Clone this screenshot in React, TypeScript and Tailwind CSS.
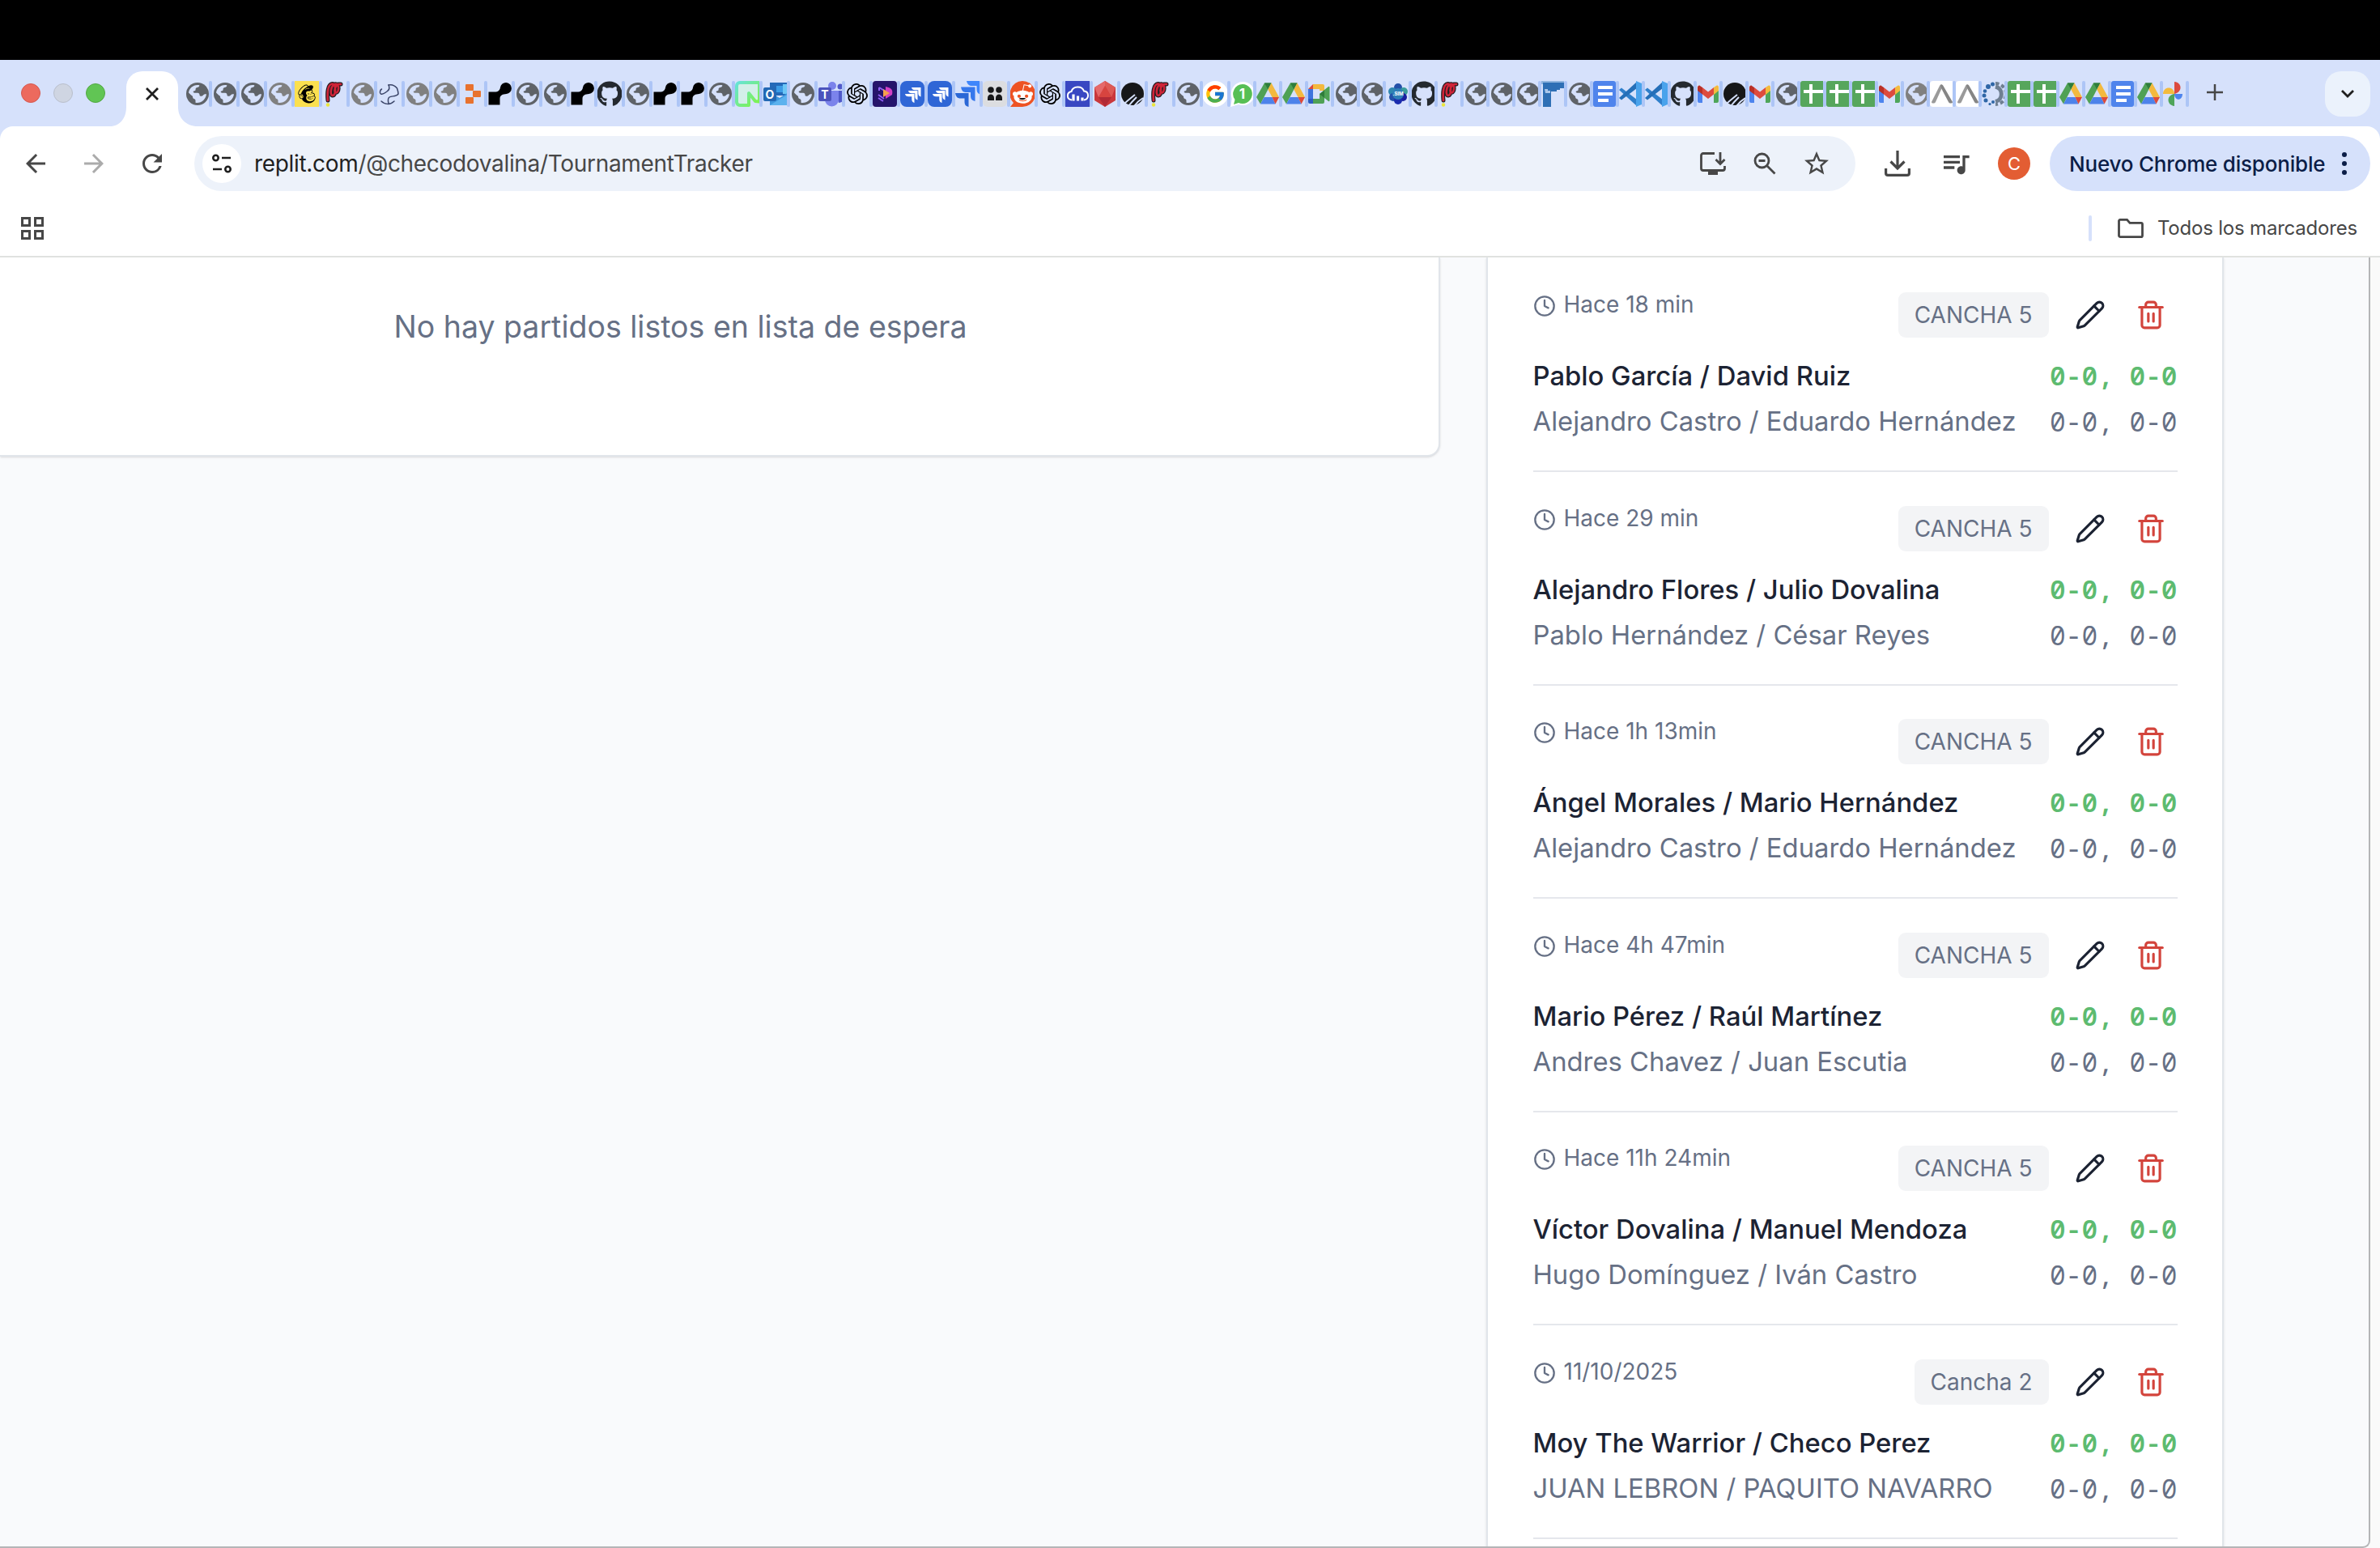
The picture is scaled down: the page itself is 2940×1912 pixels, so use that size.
import React from 'react';
import { Clock, Pencil, Trash2 } from 'lucide-react';
import { FaGithub, FaMailchimp, FaRedditAlien } from 'react-icons/fa';
import { FcGoogle } from 'react-icons/fc';
import { SiOpenai } from 'react-icons/si';
import {
  MdArrowBack,
  MdArrowForward,
  MdRefresh,
  MdStarOutline,
  MdQueueMusic,
} from 'react-icons/md';

const Box = ({ children }: { children: React.ReactNode }) => (
  <svg viewBox="0 0 32 32" className="block h-8 w-8 shrink-0">
    {children}
  </svg>
);

const Globe = ({ fill = '#5f6368' }: { fill?: string }) => (
  <Box>
    <circle cx="16" cy="16" r="14" fill={fill} />
    <path
      fill="#d6e1fb"
      d="M5 14.500C5.800 9.300 10 5.200 16 5c.900 0 1.700.100 2.400.400-.200 1.600-1.300 2.300-2.900 2.600-1.700.300-1.900 1.500-1.900 2.800 0 1.200-.9 1.400-2.100 1.600-1 .2-1 1.300-.3 1.800.6.400 1.300.500 2.300.500h2.700c1.500.1 2.300 1 2.300 2.500 0 1.300.9 1.600 2.300 1.600 1.900-.1 2.200-1.700 3.600-2.300.8-.3 1.700-.2 2.600-.200C26.200 22.500 21.500 27 15.500 27c-.8 0-1.500 0-2-.2v-2.300c0-1.300-.4-2-1.500-2.300-1.600-.5-1.800-1.300-1.900-2.500-.1-1-.7-1.700-2-2.300z"
    />
  </Box>
);

const Mailchimp = () => (
  <div className="flex h-8 w-[30px] items-center justify-center bg-[#fbe04f]">
    <FaMailchimp className="h-[26px] w-[26px] text-black" />
  </div>
);

const loop = 'M7 24C6 14 7 4 12.500 3.500c5-.3 4.500 14 .5 14.500-4 .2-2.500-13.500 3.500-14.200 5.500-.3 4 10.700.5 10.700-3 0-1.500-9 3.500-10.500h2.500';
const RedLoop = () => (
  <Box>
    <path d={loop} fill="none" stroke="#231c20" strokeWidth="5" strokeLinecap="round" strokeLinejoin="round" />
    <path d={loop} fill="none" stroke="#cf2438" strokeWidth="2.600" strokeLinecap="round" strokeLinejoin="round" />
    <circle cx="7" cy="29.500" r="2.200" fill="#ece63b" />
  </Box>
);

const Racket = () => (
  <Box>
    <g fill="none" stroke="#3a4468" strokeWidth="1.500" strokeLinecap="round" strokeLinejoin="round">
      <path d="M14 5c4-1 8 1 10.500 4 1 3 1.500 5 1.500 7-3 4-8 2-11 4-2 1.500-2 4-1 8" />
      <path d="M14 5c1.500 3 1 6-2 8-3 2-4.500 4-7.500 3-2-1-1-5 1-6M5 25c4 4 11 5 16 0" />
    </g>
  </Box>
);

const Blocks = () => (
  <Box>
    <g fill="#e8722e">
      <rect x="7" y="4" width="10" height="8" rx="1" />
      <rect x="16" y="12" width="10" height="8" rx="1" />
      <rect x="7" y="20" width="10" height="8" rx="1" />
    </g>
  </Box>
);

const BlackNode = () => (
  <Box>
    <path d="M1.500 13.500H9c4.500 0 6.500-2 7-5.500a7 7 0 1 1 7.500 8c-4.500.3-8 1.500-8 6v7.500h-14z" fill="#000" />
  </Box>
);

const Github = () => (
  <div className="flex h-8 w-8 items-start justify-center pr-[3px] pl-px">
    <FaGithub className="h-8 w-8 shrink-0 text-[#24292f]" />
  </div>
);

const Neon = () => (
  <Box>
    <defs>
      <linearGradient id="neonG" x1="0" y1="0" x2="1" y2="1">
        <stop offset="0" stopColor="#66e3d8" />
        <stop offset="1" stopColor="#7ff442" />
      </linearGradient>
    </defs>
    <path d="M17 30H6a4 4 0 0 1-4-4V6a4 4 0 0 1 4-4h24v23.500l-5-.500-8-10z" fill="#d3efe9" stroke="url(#neonG)" strokeWidth="4" strokeLinejoin="round" />
  </Box>
);

const Outlook = () => (
  <Box>
    <rect x="9" y="2" width="23" height="16" fill="#2469b8" />
    <rect x="17" y="6" width="8" height="8" fill="#3b9be6" />
    <rect x="25" y="4" width="7" height="12" fill="#6cc6f5" />
    <path d="M9 14l12 7 11-7v16H9z" fill="#3f97dd" />
    <path d="M9 30l23-14v14z" fill="#5cb2ee" />
    <rect x="1" y="8" width="16" height="17" rx="2" fill="#2368b4" />
    <text x="9" y="21.500" textAnchor="middle" fontSize="14" fontWeight="700" fill="#fff" fontFamily="Inter, sans-serif">O</text>
  </Box>
);

const Teams = () => (
  <Box>
    <circle cx="18" cy="6" r="5" fill="#7b83eb" />
    <circle cx="28" cy="7" r="3.500" fill="#5059c9" />
    <path d="M22 12h10v10a6 6 0 0 1-6 5z" fill="#5059c9" />
    <path d="M9 12h17v11a8.500 8.500 0 0 1-17 0z" fill="#7b83eb" />
    <rect x="1" y="8" width="16" height="17" rx="2" fill="#4b53bc" />
    <text x="9" y="21.500" textAnchor="middle" fontSize="14" fontWeight="700" fill="#fff" fontFamily="Inter, sans-serif">T</text>
  </Box>
);

const OpenAI = () => (
  <div className="flex h-8 w-[30px] items-center justify-center">
    <SiOpenai className="h-[26px] w-[26px] text-black" />
  </div>
);

const PurplePlay = () => (
  <Box>
    <rect x="0" width="30" height="32" rx="4" fill="#25146b" />
    <path d="M8 8l8 5M8 8v4M7 17l7 5M7 21l6 4" fill="none" stroke="#8f5ff3" strokeWidth="2" />
    <path d="M16 7c8 2 9 4 8 10l-8 5z" fill="#d13fc4" />
    <path d="M13 10l8 5-8 5z" fill="#f5a04c" />
  </Box>
);

const JiraTile = () => (
  <Box>
    <rect width="30" height="32" rx="8" fill="#2f66d6" />
    <path d="M14 8h11.500v11.500c-2.500-.7-3.200-2.300-3.200-4.500v-3.800h-4c-2.300 0-3.800-.9-4.300-3.200zM10 12h11.500v11.500c-2.500-.7-3.200-2.300-3.200-4.500v-3.800h-4c-2.300 0-3.800-.9-4.300-3.200zM6 16h11.500v11c-2.500-.7-3.200-2.300-3.200-4.500v-3.300h-4c-2.300 0-3.800-.9-4.300-3.200z" fill="#fff" />
  </Box>
);
const JiraBare = () => (
  <Box>
    <path d="M14 0h18v17c-4-1-5.500-3-5.500-7V6H21c-4 0-6-2-7-6z" fill="#3f86fb" />
    <path d="M7 7.500h17.500V25c-4-1-5.500-3-5.500-7v-4h-5.500c-4 0-5.500-2-6.500-6.500z" fill="#3577ec" />
    <path d="M0 15h16.500v17c-4-1-5-3-5-7v-3.500H6.500C2.500 21.500 1 19.500 0 15z" fill="#2a67d6" />
  </Box>
);

const People = () => (
  <Box>
    <rect width="30" height="32" rx="6" fill="#dcdde0" />
    <g fill="#17181a">
      <circle cx="10" cy="11" r="3.800" />
      <circle cx="20" cy="11" r="3.800" />
      <path d="M6 24v-3c0-6 8-6 8 0v3zM16 24v-3c0-6 8-6 8 0v3z" />
    </g>
  </Box>
);

const Reddit = () => (
  <Box>
    <path d="M15 0a16 16 0 1 1 0 32H0l4-5A16 16 0 0 1 15 0z" fill="#ee5324" />
    <g transform="translate(2 2.500)">
      <FaRedditAlien size={27} color="#fff" />
    </g>
    <path d="M11 21h8c-1 3-7 3-8 0z" fill="#17181a" />
  </Box>
);

const Cloud = () => (
  <Box>
    <rect width="32" height="32" fill="#3947c2" />
    <path d="M8 23.500c-7-1-6.500-9.500-.5-10.500 2-7 13-7.500 15.500-.5 6.500.5 7 10 0 11" fill="none" stroke="#fff" strokeWidth="2" />
    <path d="M10 16.500v8M15.500 18.500v6M21 20.500v4" stroke="#fff" strokeWidth="3.200" />
  </Box>
);

const RedGem = () => (
  <Box>
    <path d="M15 0l13 8v16l-13 8-13-8V8z" fill="#c9383c" />
    <path d="M15 0l13 8-5 12-8-14z" fill="#dd5a55" />
    <path d="M15 6l8 14H7z" fill="#d7443f" />
    <path d="M2 8l13-8v6L7 20z" fill="#e5696a" />
    <path d="M7 20h16l-8 12z" fill="#b12a36" />
  </Box>
);

const SlashDisc = () => (
  <Box>
    <circle cx="15" cy="16" r="14" fill="#161718" />
    <path d="M5 28c4-4 8-7 13-11M10 31c4-5 7-8 10-11M17 31c3-4 6-7 11-10" stroke="#d6e1fb" strokeWidth="2" fill="none" />
  </Box>
);

const GoogleDisc = () => (
  <Box>
    <circle cx="15" cy="16" r="16" fill="#fff" />
    <g transform="translate(2 3)">
      <FcGoogle size={26} />
    </g>
  </Box>
);

const Whats = () => (
  <Box>
    <path d="M15 1a14.500 14.500 0 1 1-5 28L0 32l2-10A15 15 0 0 1 15 1z" fill="#fff" />
    <path d="M15 4a12 12 0 1 1-5 23l-6 2 1.500-6A12 12 0 0 1 15 4z" fill="#57bf55" />
    <text x="14.500" y="22" textAnchor="middle" fontSize="17" fontWeight="700" fill="#fff" fontFamily="Inter, sans-serif">1</text>
  </Box>
);

const Drive = () => (
  <Box>
    <path d="M10 2.500h8.500L5 28.500 0 20z" fill="#4fa155" />
    <path d="M10 2.500h8.500l-4.200 8z" fill="#2f7d3b" />
    <path d="M18.500 2.500L28 20h-8.500l-5.200-9.500z" fill="#f3b93e" />
    <path d="M9.500 20h10l4 8.500H5z" fill="#4d82ea" />
    <path d="M19.500 20H28l-4.500 8.500z" fill="#dc4a3a" />
  </Box>
);

const Meet = () => (
  <Box>
    <path d="M6 4h12a2 2 0 0 1 2 2v6h-6v-2H6z" fill="#f3b93e" />
    <path d="M0 10l6-6v6z" fill="#dc4a3a" />
    <path d="M0 10h6v12H0z" fill="#3c73dd" />
    <path d="M0 22h6v6H2a2 2 0 0 1-2-2z" fill="#2d5cc0" />
    <path d="M6 22h8v-6l6-3v13a2 2 0 0 1-2 2H6z" fill="#4fa155" />
    <path d="M14 16l6-5v10z" fill="#2f7d3b" />
    <path d="M20 11l5-4a1 1 0 0 1 1.500 1v16a1 1 0 0 1-1.500 1l-5-4z" fill="#4fa155" />
  </Box>
);

const Sim = () => (
  <Box>
    <g fill="#2450a8">
      <circle cx="15" cy="8" r="5" />
      <circle cx="8" cy="13" r="5" fill="#2f87b0" />
      <circle cx="22" cy="13" r="5" fill="#3a9c9c" />
      <circle cx="9" cy="20" r="5" />
      <circle cx="21" cy="20" r="5" fill="#1a1fa0" />
      <circle cx="15" cy="24" r="5" fill="#1b2cae" />
      <circle cx="15" cy="16" r="7" fill="#2f7fb8" />
    </g>
    <text x="15" y="18" textAnchor="middle" fontSize="6" fontWeight="700" fill="#fff" fontFamily="Inter, sans-serif">.SIM</text>
  </Box>
);

const PixelCorner = () => (
  <Box>
    <path d="M0 0h28v4H0z" fill="#8fb4de" />
    <path d="M2 2h26v7h-5v2h-4v2h-7v19H2z" fill="#2e6fb5" />
    <path d="M4 10h4v2h3v3H5z" fill="#a9c6ea" />
  </Box>
);

const Docs = () => (
  <Box>
    <rect width="28" height="32" rx="3" fill="#4f84ec" />
    <path d="M6 8h18M6 16h18M6 24h13" stroke="#fff" strokeWidth="4" />
  </Box>
);

const VSCode = () => (
  <Box>
    <path d="M0 11l3-2.500L22 23v8z" fill="#2f7fcb" />
    <path d="M0 21l3 2.500L22 9V1z" fill="#256fb8" />
    <path d="M21 0l7 3v26l-7 3z" fill="#4aa3ec" />
  </Box>
);

const Gmail = () => (
  <Box>
    <path d="M1 11l6 4v12H3a2 2 0 0 1-2-2z" fill="#4d84ee" />
    <path d="M21 15l6-4v14a2 2 0 0 1-2 2h-4z" fill="#4fa55a" />
    <path d="M21 8l3-2c2-1 3 0 3 2v4l-6 5z" fill="#f3bb3e" />
    <path d="M7 8l7 5.500L21 8v8.500l-7 5.500-7-5.500z" fill="#dd4b3e" />
    <path d="M1 8c0-2 2-3 3-2l3 2v8.500L1 12z" fill="#b93028" />
  </Box>
);

const Sheets = () => (
  <Box>
    <rect width="30" height="32" rx="3" fill="#56a65c" />
    <path d="M4 13h24M13 4v24" stroke="#fff" strokeWidth="4" />
  </Box>
);

const Lambda = () => (
  <Box>
    <rect width="30" height="32" rx="4" fill="#fff" />
    <path d="M2 26L12 6c1-2 3-2 4 0l-9 20c-1 2-5 2-5 0z" fill="#9a9a9a" />
    <path d="M13 5c1.500-1 3 0 3.500 1L28 26c0 2-4 2-5 0L14 9z" fill="#858585" />
  </Box>
);

const Gear = () => (
  <Box>
    <path d="M17 7a9.500 9.500 0 0 1 0 18.500" fill="none" stroke="#6f7f92" strokeWidth="5" />
    <path d="M17 3a13 13 0 0 1 0 26" fill="none" stroke="#6f7f92" strokeWidth="4" strokeDasharray="4.500 3" />
    <g fill="#2f66a6">
      <circle cx="13.500" cy="4" r="2.500" />
      <circle cx="8" cy="7" r="3" />
      <circle cx="4" cy="12.500" r="2.300" />
      <circle cx="3" cy="18" r="2.500" />
      <circle cx="5" cy="24" r="2.500" />
      <circle cx="10" cy="28.500" r="1.600" />
      <circle cx="14" cy="26" r="2" />
    </g>
  </Box>
);

const Photos = () => (
  <Box>
    <path d="M14 1c10 1 10 13 0 15z" fill="#dc4a3e" />
    <path d="M24 16c0 9-10 9-10 0z" fill="#4d84ee" />
    <path d="M14 16v15c-10-1-10-14 0-15z" fill="#4fa55a" />
    <path d="M0 16c0-10 14-10 14 0z" fill="#f3bb3e" />
  </Box>
);

const DarkGlobe = () => <Globe />;
const GreyGlobe = () => <Globe fill="#808080" />;
const g = DarkGlobe;
const y = GreyGlobe;

const wideTabs: Array<() => React.ReactElement> = [
  g, g, g, y, Mailchimp, RedLoop, y, Racket, y, y, Blocks, BlackNode, g, g, BlackNode, Github, g,
  BlackNode, BlackNode, g, Neon, Outlook, g, Teams, OpenAI, PurplePlay, JiraTile, JiraTile, JiraBare,
  People, Reddit, OpenAI, Cloud, RedGem, SlashDisc, RedLoop, g, GoogleDisc,
];
const narrowTabs: Array<() => React.ReactElement> = [
  Whats, Drive, Drive, Meet, g, g, Sim, Github, RedLoop, g, g, g, PixelCorner, g, Docs, VSCode, VSCode,
  Github, Gmail, SlashDisc, Gmail, g, Sheets, Sheets, Sheets, Gmail, y, Lambda, Lambda, Gear, Sheets,
  Sheets, Drive, Drive, Docs, Drive, Photos,
];

const TabStrip = () => (
  <div className="flex h-[82px] items-start bg-[#d6e1fb]">
    <div className="flex gap-4 pt-[29px] pl-[26px]">
      <div className="h-6 w-6 rounded-full border border-[#d5584f] bg-[#ec6a5e]" />
      <div className="h-6 w-6 rounded-full border border-[#b9bfcc] bg-[#cfd5e2]" />
      <div className="h-6 w-6 rounded-full border border-[#52a842] bg-[#61c554]" />
    </div>
    <div className="ml-1.5 flex h-[68px] items-end self-end">
      <svg viewBox="0 0 20 24" className="h-6 w-5" fill="#fff">
        <path d="M0 24C12 24 20 14 20 0v24z" />
      </svg>
      <div className="flex h-[68px] w-16 items-center justify-center rounded-t-[20px] bg-white pb-[12px]">
        <svg viewBox="0 0 16 16" className="h-4 w-4" stroke="#1f1f1f" strokeWidth="2.800">
          <path d="M1 1l14 14M15 1L1 15" />
        </svg>
      </div>
      <svg viewBox="0 0 24 24" className="-mr-6 h-6 w-6" fill="#fff">
        <path d="M24 24C10 24 0 14 0 0v24z" />
      </svg>
    </div>
    <div className="flex pt-[26px] pl-2">
      {wideTabs.map((Icon, i) => (
        <div key={i} className="flex h-8 w-[34px]">
          <div className="h-8 w-[30px] overflow-hidden"><Icon /></div>
          <div className="h-8 w-1 rounded-sm bg-[#adc5f6]" />
        </div>
      ))}
      {narrowTabs.map((Icon, i) => (
        <div key={i} className="flex h-8 w-8">
          <div className="h-8 w-7 overflow-hidden"><Icon /></div>
          <div className="h-8 w-1 rounded-sm bg-[#adc5f6]" />
        </div>
      ))}
    </div>
    <svg viewBox="0 0 20 20" className="mt-[30px] ml-[22px] h-5 w-5" stroke="#474747" strokeWidth="2.500">
      <path d="M10 0v20M0 10h20" />
    </svg>
    <div className="mt-3.5 mr-3 ml-auto flex h-14 w-14 items-center justify-center rounded-[20px] bg-[#ebf2fc]">
      <svg viewBox="0 0 16 10" className="h-2.5 w-4" fill="none" stroke="#1f1f1f" strokeWidth="2.800">
        <path d="M1 1l7 7 7-7" />
      </svg>
    </div>
  </div>
);

const Toolbar = () => (
  <div className="bg-[#d6e1fb]">
    <div className="flex h-[92px] items-center rounded-t-2xl bg-white">
      <MdArrowBack className="ml-[26px] h-9 w-9 text-[#474747]" />
      <MdArrowForward className="ml-9 h-9 w-9 text-[#ababab]" />
      <MdRefresh className="ml-9 h-9 w-9 text-[#474747]" />
      <div className="ml-[34px] flex h-[68px] w-[2052px] items-center rounded-full bg-[#edf2fa]">
        <div className="ml-2.5 flex h-12 w-12 items-center justify-center rounded-full bg-white">
          <svg viewBox="0 0 24 24" className="h-6 w-6" fill="none" stroke="#1f1f1f" strokeWidth="2.600">
            <circle cx="4.500" cy="5" r="3.200" />
            <path d="M12 5h11M1 19h11" />
            <circle cx="19.500" cy="19" r="3.200" />
          </svg>
        </div>
        <div className="ml-4 text-[28px] tracking-[-0.32px] text-[#474747]">
          <span className="text-[#1f1f1f]">replit.com</span>/@checodovalina/TournamentTracker
        </div>
        <svg viewBox="0 0 32 28" className="ml-auto h-7 w-8" fill="none" stroke="#474747" strokeWidth="2.800">
          <path d="M18 1.500H4A2.500 2.500 0 0 0 1.500 4v16A2.500 2.500 0 0 0 4 22.500h24a2.500 2.500 0 0 0 2.500-2.500v-3" />
          <path d="M25 0v14M19.500 9l5.500 5.500L30.500 9" />
          <path d="M10 26h12" strokeWidth="4" />
        </svg>
        <svg viewBox="0 0 28 28" className="ml-[34px] h-7 w-7" fill="none" stroke="#474747" strokeWidth="2.800">
          <circle cx="10.500" cy="10.500" r="8.500" />
          <path d="M17 17l9.500 9.500M6.500 10.500h8" />
        </svg>
        <MdStarOutline className="mr-[30px] ml-8 h-9 w-9 text-[#474747]" />
      </div>
      <svg viewBox="0 0 32 32" className="ml-9 h-8 w-8" fill="none" stroke="#474747" strokeWidth="3.200">
        <path d="M16 0v21M7.500 13.500L16 22l8.500-8.500M1.600 22v6a2.400 2.400 0 0 0 2.400 2.400h24a2.400 2.400 0 0 0 2.400-2.400v-6" />
      </svg>
      <MdQueueMusic className="ml-9 h-10 w-10 text-[#474747]" />
      <div className="ml-8 flex h-10 w-10 items-center justify-center rounded-full bg-[#e35d33] text-[22px] text-white">C</div>
      <div className="ml-6 flex h-[68px] w-[396px] items-center rounded-full bg-[#d6e1fb] pl-6 text-[26px] font-medium tracking-[-0.2px] text-[#0b1d47]">
        <span className="w-[321px] whitespace-nowrap">Nuevo Chrome disponible</span>
        <svg viewBox="0 0 6 28" className="ml-4 h-7 w-1.5" fill="#0b1d47">
          <circle cx="3" cy="3" r="3" />
          <circle cx="3" cy="14" r="3" />
          <circle cx="3" cy="25" r="3" />
        </svg>
      </div>
    </div>
  </div>
);

const Bookmarks = () => (
  <div className="flex h-[70px] items-center border-b-2 border-[#e0e2e0] bg-white">
    <svg viewBox="0 0 28 28" className="ml-[26px] h-7 w-7" fill="none" stroke="#474747" strokeWidth="3">
      <path d="M1.500 1.500h9v9h-9zM17.500 1.500h9v9h-9zM1.500 17.500h9v9h-9zM17.500 17.500h9v9h-9z" />
    </svg>
    <div className="ml-auto h-8 w-1 rounded-sm bg-[#d6e1fb]" />
    <svg viewBox="0 0 32 24" className="ml-8 h-6 w-8" fill="none" stroke="#474747" strokeWidth="2.800">
      <path d="M3 1.400h8.500l3.500 4h14a1.500 1.500 0 0 1 1.500 1.500v14a1.700 1.700 0 0 1-1.700 1.700H3.200a1.700 1.700 0 0 1-1.700-1.700V3A1.500 1.500 0 0 1 3 1.400z" />
    </svg>
    <div className="mr-7 ml-[17px] text-[24px] tracking-[-0.2px] whitespace-nowrap text-[#474747]">Todos los marcadores</div>
  </div>
);

type Match = { time: string; court: string; winner: string; loser: string };
const matches: Match[] = [
  { time: 'Hace 18 min', court: 'CANCHA 5', winner: 'Pablo García / David Ruiz', loser: 'Alejandro Castro / Eduardo Hernández' },
  { time: 'Hace 29 min', court: 'CANCHA 5', winner: 'Alejandro Flores / Julio Dovalina', loser: 'Pablo Hernández / César Reyes' },
  { time: 'Hace 1h 13min', court: 'CANCHA 5', winner: 'Ángel Morales / Mario Hernández', loser: 'Alejandro Castro / Eduardo Hernández' },
  { time: 'Hace 4h 47min', court: 'CANCHA 5', winner: 'Mario Pérez / Raúl Martínez', loser: 'Andres Chavez / Juan Escutia' },
  { time: 'Hace 11h 24min', court: 'CANCHA 5', winner: 'Víctor Dovalina / Manuel Mendoza', loser: 'Hugo Domínguez / Iván Castro' },
  { time: '11/10/2025', court: 'Cancha 2', winner: 'Moy The Warrior / Checo Perez', loser: 'JUAN LEBRON / PAQUITO NAVARRO' },
];

const Score = () => (
  <span className="font-['Noto_Sans_Mono','DejaVu_Sans_Mono',monospace] whitespace-pre">0-0, 0-0</span>
);

const MatchRow = ({ m }: { m: Match }) => (
  <div className="h-[263.5px] shrink-0 border-b-2 border-[#e5e7ec] pt-[41.5px]">
    <div className="flex h-14 items-start justify-between">
      <div className="-mt-px flex items-center text-[28px] leading-7 text-[#667085]">
        <Clock className="mt-1 mr-2.5 h-7 w-7" strokeWidth={2} />
        {m.time}
      </div>
      <div className="flex items-center">
        <div className="mr-3.5 flex h-14 items-center rounded-[9px] bg-[#f3f4f6] px-5 text-[28px] text-[#667085]">{m.court}</div>
        <div className="flex w-[75px] justify-center">
          <Pencil className="h-[38px] w-[38px] text-[#1c2333]" strokeWidth={2} />
        </div>
        <div className="-mr-[5px] flex w-[75px] justify-center">
          <Trash2 className="h-[38px] w-[38px] text-[#d3443c]" strokeWidth={2} />
        </div>
      </div>
    </div>
    <div className="mt-[19px] flex h-14 items-center justify-between text-[32.8px] leading-[56px] font-medium text-[#1c2333]">
      <span className="whitespace-nowrap">{m.winner}</span>
      <span className="font-semibold text-[#5dbb70]"><Score /></span>
    </div>
    <div className="flex h-[57px] items-center justify-between text-[32.8px] leading-[57px] text-[#667085]">
      <span className="whitespace-nowrap">{m.loser}</span>
      <Score />
    </div>
  </div>
);

export default function App() {
  return (
    <div className="flex h-[1912px] w-[2940px] flex-col overflow-hidden bg-[#fafafa] font-['Inter',sans-serif]">
      <div className="h-[74px] shrink-0 bg-black" />
      <TabStrip />
      <Toolbar />
      <Bookmarks />
      <div className="flex h-[1594px] w-[2928px] items-start overflow-hidden rounded-br-[9px] border-r-2 border-b-2 border-[#b4b5b7] bg-[#f9fafc]">
        <div className="flex h-[246px] w-[1779px] justify-center rounded-br-2xl border-r-2 border-b-2 border-[#e1e5ea] bg-white pr-[96px] shadow-sm">
          <div className="mt-[63px] text-[37.5px] leading-[46px] whitespace-nowrap text-[#667085]">
            No hay partidos listos en lista de espera
          </div>
        </div>
        <div className="ml-[57px] flex h-[1592px] w-[911px] flex-col overflow-hidden border-x-2 border-[#e1e5ea] bg-white px-[55.5px] pt-[1.5px] shadow-sm">
          {matches.map((m) => (
            <MatchRow key={m.winner} m={m} />
          ))}
        </div>
      </div>
    </div>
  );
}
